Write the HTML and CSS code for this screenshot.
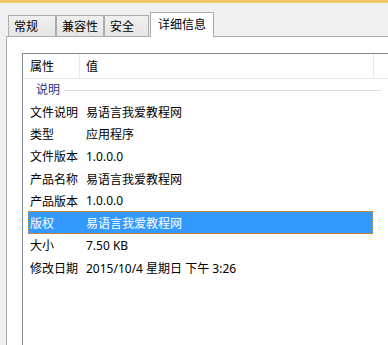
FILE: index.html
```html
<!DOCTYPE html>
<html lang="zh">

<head>
    <meta charset="UTF-8">
    <title>属性 - 详细信息</title>
    <link rel="stylesheet" href="styles.css">
</head>

<body>

    <div class="frame-edge"></div>

    <div class="tabs">
        <div class="tab tab-general">常规</div>
        <div class="tab tab-compat">兼容性</div>
        <div class="tab tab-security">安全</div>
        <div class="tab tab-details active">详细信息</div>
    </div>

    <div class="panel">
        <div class="listview">
            <div class="list-header">
                <div class="col-name">属性</div>
                <div class="col-value">值</div>
            </div>

            <div class="group">
                <span class="group-title">说明</span>
                <span class="group-line"></span>
            </div>

            <div class="row"><span class="key">文件说明</span><span class="val">易语言我爱教程网</span></div>
            <div class="row"><span class="key">类型</span><span class="val">应用程序</span></div>
            <div class="row"><span class="key">文件版本</span><span class="val">1.0.0.0</span></div>
            <div class="row"><span class="key">产品名称</span><span class="val">易语言我爱教程网</span></div>
            <div class="row"><span class="key">产品版本</span><span class="val">1.0.0.0</span></div>
            <div class="row selected"><span class="key">版权</span><span class="val">易语言我爱教程网</span></div>
            <div class="row"><span class="key">大小</span><span class="val">7.50 KB</span></div>
            <div class="row"><span class="key">修改日期</span><span class="val">2015/10/4 星期日 下午 3:26</span></div>
        </div>
    </div>

</body>

</html>
```

FILE: styles.css
```css
html,
body {
    margin: 0;
    height: 100%;
    overflow: hidden;
}

body {
    font-family: "Segoe UI", "Noto Sans", "Noto Sans CJK SC", sans-serif;
    font-size: 12px;
    color: #000000;
    background-color: #f0f0f0;
    display: flex;
    flex-direction: column;
}

/* Yellow strip of the window frame at the very top */
.frame-edge {
    height: 3px;
    background-color: #f1c96b;
    flex: none;
}

/* Tab strip */
.tabs {
    display: flex;
    align-items: flex-end;
    height: 34px;
    padding-left: 8px;
    margin-bottom: -1px; /* active tab sits over the panel border */
    flex: none;
}

.tab {
    box-sizing: border-box;
    height: 22px;
    line-height: 21px;
    padding-left: 5px;
    border: 1px solid #acacac;
    border-bottom: none;
    background: linear-gradient(#f0f0f0, #e5e5e5);
    white-space: nowrap;
}

.tab-general { width: 48px; }
.tab-compat { width: 48px; }
.tab-security { width: 45px; }

.tab.active {
    width: 64px;
    height: 25px;
    line-height: 24px;
    padding-left: 7px;
    margin-left: 1px;
    background: #ffffff;
    position: relative;
    z-index: 1;
}

/* White page below the tabs */
.panel {
    flex: 1;
    min-height: 0;
    margin-left: 6px;
    padding: 16px 0 0 15px;
    background-color: #ffffff;
    border-top: 1px solid #acacac;
    border-left: 1px solid #acacac;
    overflow: hidden;
}

/* List view with the property rows */
.listview {
    height: 100%;
    background-color: #ffffff;
    border-top: 1px solid #828790;
    border-left: 1px solid #828790;
}

.list-header {
    display: flex;
    height: 24px;
    border-bottom: 1px solid #e5eaf0;
}

.list-header > div {
    box-sizing: border-box;
    line-height: 26px;
    border-right: 1px solid #e5eaf0;
}

.col-name { width: 57px; padding-left: 7px; }
.col-value { width: 294px; padding-left: 6px; }

/* Group header "说明" with its rule */
.group {
    display: flex;
    align-items: center;
    height: 21px;
    padding: 1px 14px 0 13px;
    box-sizing: border-box;
    width: 372px;
}

.group-title {
    color: #1e3287;
    line-height: 16px;
}

.group-line {
    flex: 1;
    height: 1px;
    margin-left: 4px;
    background-color: #d5dfe9;
}

.row {
    display: flex;
    align-items: center;
    box-sizing: border-box;
    height: 22.3px;
    width: 345px;
    margin-left: 5px;
    padding-top: 1px;
    border: 1px dotted transparent;
    white-space: nowrap;
}

.key {
    width: 56px;
    padding-left: 1px;
    flex: none;
}

.row.selected {
    background-color: #3399ff;
    color: #ffffff;
    border-color: #d08a3c;
}
```
